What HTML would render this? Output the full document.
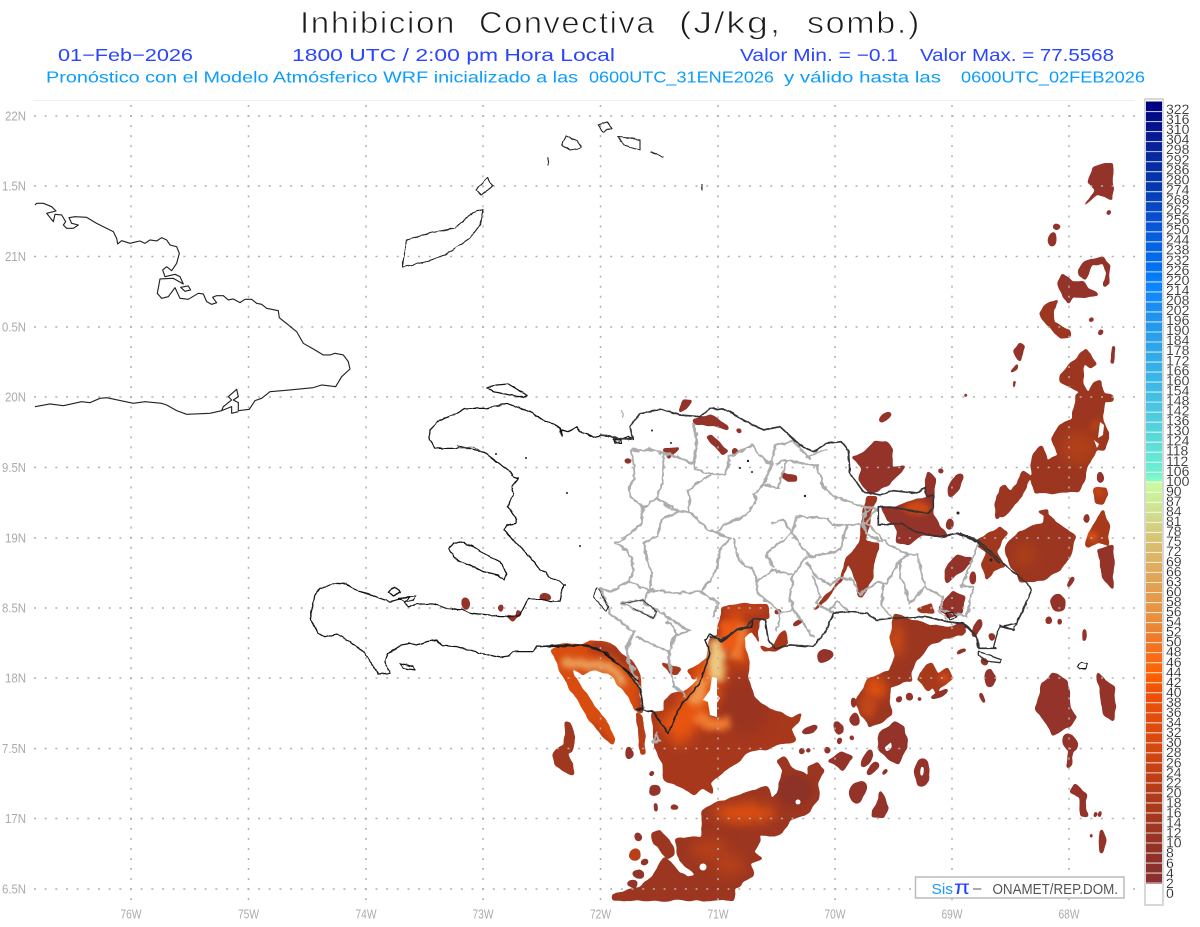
<!DOCTYPE html>
<html><head><meta charset="utf-8"><title>Inhibicion Convectiva</title>
<style>html,body{margin:0;padding:0;background:#fff}svg{display:block}text{font-family:"Liberation Sans",sans-serif}</style></head>
<body>
<svg width="1200" height="927" viewBox="0 0 1200 927" xmlns="http://www.w3.org/2000/svg">
<defs>
<filter id="b3" filterUnits="userSpaceOnUse" x="0" y="0" width="1200" height="927" color-interpolation-filters="sRGB"><feGaussianBlur stdDeviation="3"/></filter>
<filter id="b6" filterUnits="userSpaceOnUse" x="0" y="0" width="1200" height="927" color-interpolation-filters="sRGB"><feGaussianBlur stdDeviation="6"/></filter>
<filter id="goo" filterUnits="userSpaceOnUse" x="0" y="0" width="1200" height="927" color-interpolation-filters="sRGB">
<feTurbulence type="fractalNoise" baseFrequency=".07" numOctaves="2" seed="4" result="n"/>
<feDisplacementMap in="SourceGraphic" in2="n" scale="5" xChannelSelector="R" yChannelSelector="G" result="d"/>
<feGaussianBlur in="d" stdDeviation="1.1"/>
<feComponentTransfer><feFuncA type="linear" slope="8" intercept="-1.5"/></feComponentTransfer>
</filter>
<filter id="wig" filterUnits="userSpaceOnUse" x="0" y="0" width="1200" height="927" color-interpolation-filters="sRGB">
<feTurbulence type="fractalNoise" baseFrequency=".16" numOctaves="2" seed="7" result="n"/>
<feDisplacementMap in="SourceGraphic" in2="n" scale="5" xChannelSelector="R" yChannelSelector="G"/>
</filter>
<filter id="wig2" filterUnits="userSpaceOnUse" x="0" y="0" width="1200" height="927" color-interpolation-filters="sRGB">
<feTurbulence type="fractalNoise" baseFrequency=".2" numOctaves="1" seed="2" result="n"/>
<feDisplacementMap in="SourceGraphic" in2="n" scale="2.5" xChannelSelector="R" yChannelSelector="G"/>
</filter>
<linearGradient id="cb" gradientUnits="userSpaceOnUse" x1="0" y1="102" x2="0" y2="883">
<stop offset="0" stop-color="#00007f"/><stop offset=".055" stop-color="#08209a"/><stop offset=".107" stop-color="#0338ae"/><stop offset=".158" stop-color="#0855d8"/><stop offset=".21" stop-color="#0070f0"/><stop offset=".235" stop-color="#0a85ff"/><stop offset=".27" stop-color="#1e90f0"/><stop offset=".32" stop-color="#30a8e8"/><stop offset=".36" stop-color="#3cb8e8"/><stop offset=".39" stop-color="#4ac4e0"/><stop offset=".435" stop-color="#5cdcd8"/><stop offset=".475" stop-color="#70f0d0"/><stop offset=".4853" stop-color="#88ffc8"/><stop offset=".4853" stop-color="#c8ffa0"/><stop offset=".525" stop-color="#d0e090"/><stop offset=".565" stop-color="#d8c070"/><stop offset=".605" stop-color="#e0a858"/><stop offset=".66" stop-color="#e89040"/><stop offset=".69" stop-color="#f07828"/><stop offset=".735" stop-color="#ff6000"/><stop offset=".755" stop-color="#f05008"/><stop offset=".825" stop-color="#d84810"/><stop offset=".875" stop-color="#b83c18"/><stop offset=".925" stop-color="#a03820"/><stop offset=".965" stop-color="#903028"/><stop offset="1" stop-color="#883030"/>
</linearGradient>
<clipPath id="cMain"><path d="M722,607L740,604L755,606L767,605L769,617L760,620L757,632L760,645L768,650L785,630L788,643L775,650L764,652L752,630L747,633L743,637L747,653L748,677L753,697L770,710L792,718L802,713L797,722L790,730L795,740L773,747L747,753L735,763L717,777L710,783L713,793L703,787L693,795L683,788L665,780L662,763L655,747L652,712L663,712L665,702L672,695L683,692L700,678L692,678L687,670L707,660L710,638L718,636L722,607Z"/></clipPath>
<clipPath id="cCres"><path d="M553,650L560,645L582,645L590,640L610,643L630,660L640,677L640,700L642,713L635,710L628,695L617,683L608,672L590,670L582,675L572,668L573,677L593,703L612,732L615,737L613,745L602,735L590,720L573,692L560,670Z"/></clipPath>
<clipPath id="cSouth"><path d="M703,810L720,802L767,787L772,800L777,793L783,770L777,762L785,757L792,768L810,777L808,767L817,763L824,770L818,783L818,798L810,812L790,820L782,833L775,837L760,835L760,842L752,852L763,859L750,863L753,877L743,883L735,888L733,900L613,900L613,895L640,887L653,877L663,857L680,872L687,877L695,875L680,860L675,840L695,837L702,838Z"/></clipPath>
<clipPath id="cSE"><path d="M890,637L895,613L910,620L927,625L947,627L963,626L965,633L943,640L932,643L917,660L910,672L912,680L890,687L890,708L892,715L880,723L868,727L858,707L857,698L868,680L890,670L895,657Z"/></clipPath>
<clipPath id="cBand"><path d="M1060,375L1070,363L1087,349L1097,363L1092,368L1083,363L1082,383L1090,393L1093,383L1100,382L1105,393L1113,397L1113,401L1105,400L1103,420L1107,433L1105,450L1097,450L1088,463L1080,492L1035,493L1030,477L1022,497L1003,517L995,512L1000,487L1005,485L1012,492L1023,472L1032,478L1033,453L1042,447L1048,462L1058,455L1052,437L1060,425L1072,418L1078,395L1082,393L1060,382Z"/></clipPath>
<clipPath id="cD8"><path d="M895,507L907,502L933,497L935,507L932,515L947,537L943,538L923,533L912,542L907,546L897,542L897,530L880,508Z"/></clipPath>
<clipPath id="cTop"><path d="M1005,547L1018,532L1032,527L1043,523L1045,515L1037,512L1047,508L1048,515L1060,525L1075,537L1072,553L1060,570L1043,580L1022,583L1012,567Z"/></clipPath>
</defs>
<rect width="1200" height="927" fill="#fff"/>

<!-- titles -->
<g stroke="#fff" stroke-width=".8" fill="#1a1a1a" font-size="31" style="letter-spacing:1.5px">
<text x="300" y="33" textLength="156" lengthAdjust="spacingAndGlyphs">Inhibicion</text>
<text x="479" y="33" textLength="177" lengthAdjust="spacingAndGlyphs">Convectiva</text>
<text x="679" y="33" textLength="103" lengthAdjust="spacingAndGlyphs">(J/kg,</text>
<text x="807" y="33" textLength="114" lengthAdjust="spacingAndGlyphs">somb.)</text>
</g>
<g fill="#2a45ff" font-size="17.5">
<text x="58" y="61" textLength="135" lengthAdjust="spacingAndGlyphs">01−Feb−2026</text>
<text x="292" y="61" textLength="323" lengthAdjust="spacingAndGlyphs">1800 UTC / 2:00 pm Hora Local</text>
<text x="740" y="61" textLength="158" lengthAdjust="spacingAndGlyphs">Valor Min. = −0.1</text>
<text x="920" y="61" textLength="194" lengthAdjust="spacingAndGlyphs">Valor Max. = 77.5568</text>
</g>
<g fill="#0a9cff" font-size="16">
<text x="46" y="82.5" textLength="532" lengthAdjust="spacingAndGlyphs">Pronóstico con el Modelo Atmósferico WRF inicializado a las</text>
<text x="589" y="82.5" textLength="185" lengthAdjust="spacingAndGlyphs">0600UTC_31ENE2026</text>
<text x="784" y="82.5" textLength="157" lengthAdjust="spacingAndGlyphs">y válido hasta las</text>
<text x="961" y="82.5" textLength="184" lengthAdjust="spacingAndGlyphs">0600UTC_02FEB2026</text>
</g>

<line x1="33" y1="100.5" x2="1135" y2="100.5" stroke="#f0f0f0"/>

<!-- CIN field -->
<g fill="#93332a" filter="url(#goo)">
<g clip-path="url(#cMain)"><rect x="640" y="600" width="180" height="200" fill="#a8381c"/>
<ellipse cx="745" cy="705" rx="25" ry="30" fill="#9a3420" filter="url(#b6)"/>
<path d="M668,735C690,715 705,700 710,660" stroke="#e85510" stroke-width="32" fill="none" filter="url(#b6)"/>
<path d="M735,610L741,665" stroke="#e8500c" stroke-width="14" fill="none" filter="url(#b6)"/>
<path d="M697,715L710,725L730,722" stroke="#f07a30" stroke-width="12" fill="none" filter="url(#b3)"/>
<path d="M742,625L735,660" stroke="#ee7a30" stroke-width="12" fill="none" filter="url(#b3)"/>
<path d="M718,640L716,680" stroke="#ecc880" stroke-width="16" fill="none" filter="url(#b3)"/>
<path d="M703,680L694,705" stroke="#f09850" stroke-width="12" fill="none" filter="url(#b3)"/>
<path d="M728,620L728,650" stroke="#ee5a14" stroke-width="14" fill="none" filter="url(#b3)"/>
<path d="M725,608L765,610" stroke="#c8441a" stroke-width="6" fill="none" filter="url(#b3)"/>
</g>
<g clip-path="url(#cCres)"><rect x="550" y="635" width="100" height="115" fill="#d84c10"/>
<path d="M590,645L620,652L645,680L645,715" stroke="#a5381d" stroke-width="12" fill="none" filter="url(#b3)"/>
<path d="M562,662L590,665L610,666L625,685" stroke="#eba05c" stroke-width="9" fill="none" filter="url(#b3)"/>
<path d="M590,725L610,745" stroke="#b53e18" stroke-width="8" fill="none" filter="url(#b3)"/>
</g>
<path d="M637,713L643,717L645,753L640,754L638,727Z" fill="#b53e18"/>
<g clip-path="url(#cSouth)"><rect x="610" y="755" width="220" height="150" fill="#9c3620"/>
<ellipse cx="745" cy="813" rx="32" ry="9" fill="#e0500f" filter="url(#b6)"/>
<ellipse cx="710" cy="850" rx="18" ry="12" fill="#b5401a" filter="url(#b6)"/>
<ellipse cx="730" cy="865" rx="15" ry="12" fill="#b5401a" filter="url(#b6)"/>
<ellipse cx="795" cy="790" rx="18" ry="16" fill="#8d3226" filter="url(#b3)"/>
</g>
<path d="M652,832L660,830L672,845L675,855L668,858L655,845Z" fill="#9c3620"/>
<ellipse cx="634" cy="854" rx="5" ry="6" fill="#b84018"/><ellipse cx="638" cy="837" rx="3" ry="4"/><ellipse cx="645" cy="863" rx="3" ry="3"/><ellipse cx="638" cy="874" rx="5" ry="4"/><ellipse cx="632" cy="884" rx="4" ry="3"/>
<ellipse cx="654" cy="790" rx="5" ry="5"/><circle cx="652" cy="773" r="2"/><ellipse cx="674" cy="807" rx="3.5" ry="2"/><ellipse cx="656" cy="808" rx="1.5" ry="4"/><ellipse cx="629" cy="753" rx="3" ry="6"/>
<path d="M564,722L570,722L575,738L572,750L568,752L570,762L574,775L566,772L555,765L552,755L560,747L563,745L565,735Z" fill="#a0381f"/>
<ellipse cx="810" cy="730" rx="8" ry="3" transform="rotate(-30 810 730)"/><circle cx="803" cy="751" r="2.5"/><circle cx="827" cy="750" r="3"/><circle cx="809" cy="751" r="1.5"/><ellipse cx="838" cy="728" rx="3" ry="6"/>
<path d="M836,762L840,753L840,770Z"/>
<path d="M662,662L672,667L682,670L678,675L670,673Z" fill="#a8381c"/>
<ellipse cx="466" cy="603" rx="3.5" ry="6"/><ellipse cx="545" cy="597" rx="5" ry="3"/><ellipse cx="501" cy="609" rx="2" ry="3"/><path d="M507,615L515,617L518,609L520,612L513,622Z"/><ellipse cx="627" cy="460" rx="3" ry="2"/>
<path d="M684,400L691,400L685,410L680,413Z"/>
<path d="M693,418L710,415L728,425L728,430L715,425L695,423Z"/>
<path d="M663,448L680,447L668,459Z"/>
<path d="M705,437L710,435L728,450L723,454Z"/>
<circle cx="735" cy="452" r="3"/><circle cx="738" cy="431" r="2"/>
<path d="M782,472L787,475L797,477L797,482L788,482L782,475Z"/>
<path d="M853,458L867,450L875,442L887,442L892,450L892,467L907,466L893,480L877,493L870,495L860,480L862,467Z"/>
<ellipse cx="885" cy="417" rx="6" ry="3" transform="rotate(-30 885 417)"/>
<g clip-path="url(#cD8)"><rect x="875" y="490" width="80" height="60"/><ellipse cx="918" cy="508" rx="14" ry="6" fill="#d24c12" filter="url(#b3)"/></g>
<path d="M927,472L935,480L933,497L925,497L926,482Z"/>
<ellipse cx="955" cy="485" rx="4" ry="13" transform="rotate(30 955 485)"/><circle cx="941" cy="471" r="2"/>
<path d="M867,497L877,498L870,513L870,523L867,533L867,542L878,543L872,577L863,597L858,597L857,582L848,563L845,570L840,580L830,597L810,613L833,590L842,573L847,557L860,543L863,520Z" fill="#9c3620"/>
<ellipse cx="950" cy="525" rx="3" ry="5"/><ellipse cx="998" cy="507" rx="3" ry="12"/>
<path d="M945,570L957,555L972,560L960,572L947,583Z"/>
<path d="M940,608L952,590L965,597L963,613L947,617Z"/>
<path d="M917,610L933,603L935,613L920,613Z" fill="#a0381f"/>
<ellipse cx="959" cy="630" rx="5" ry="6"/><ellipse cx="978" cy="627" rx="3" ry="8" transform="rotate(20 978 627)"/>
<ellipse cx="797" cy="622" rx="5" ry="2" transform="rotate(-25 797 622)"/><ellipse cx="825" cy="656" rx="8" ry="5.5" transform="rotate(-35 825 656)"/><ellipse cx="778" cy="612" rx="3" ry="2"/>
<path d="M1095,167L1113,163L1112,200L1097,193L1083,208L1095,190L1088,182Z"/><circle cx="1108" cy="212" r="2"/>
<ellipse cx="1052" cy="240" rx="4" ry="7" transform="rotate(15 1052 240)"/><ellipse cx="1056" cy="227" rx="3.5" ry="2.5"/>
<path d="M1058,282L1064,275L1073,282L1082,282L1098,295L1083,297L1073,297L1068,303L1060,290Z"/>
<path d="M1078,270L1085,262L1103,257L1109,267L1108,282L1103,287L1103,282L1107,273L1103,263L1092,265L1084,280L1078,275Z"/>
<path d="M1039,313L1050,302L1058,300L1053,310L1055,323L1070,330L1070,337L1060,338L1047,325Z" fill="#9c3620"/>
<path d="M1013,352L1020,343L1025,347L1021,362Z"/>
<path d="M1011,372L1018,363L1016,370Z"/><path d="M1022,374L1027,380L1028,382Z"/><path d="M1013,381L1015,381L1014,392Z"/>
<circle cx="1091" cy="320" r="1.7"/><circle cx="1101" cy="332" r="2"/><circle cx="966" cy="396" r="1.5"/>
<rect x="1112" y="347" width="2" height="16"/>
<g clip-path="url(#cBand)"><rect x="990" y="345" width="130" height="175" fill="#9c3620"/><ellipse cx="1078" cy="448" rx="18" ry="16" fill="#b04018" filter="url(#b6)"/><ellipse cx="1096" cy="425" rx="6" ry="8" fill="#b04018" filter="url(#b3)"/></g>
<ellipse cx="1100" cy="477" rx="3" ry="5"/>
<path d="M1095,490L1107,487L1108,495L1103,503L1095,503Z" fill="#a83a1c"/><ellipse cx="1100" cy="493" rx="5" ry="3" fill="#de5010" filter="url(#b3)"/>
<path d="M1085,545L1095,523L1103,510L1108,527L1108,545L1098,542L1088,547Z" fill="#a83a1c"/><ellipse cx="1093" cy="537" rx="4" ry="4" fill="#f06010" filter="url(#b3)"/>
<ellipse cx="1087" cy="518" rx="2.5" ry="4"/>
<path d="M1098,550L1113,545L1113,590L1103,577Z"/>
<g clip-path="url(#cTop)"><rect x="1000" y="505" width="80" height="80" fill="#9c3620"/><ellipse cx="1025" cy="555" rx="10" ry="12" fill="#ac4018" filter="url(#b6)"/></g>
<path d="M978,540L1000,527L1007,533L995,550L1005,567L993,570L987,580L982,563L987,553L978,548Z" fill="#a0381f"/>
<ellipse cx="1058" cy="603" rx="7" ry="8"/><ellipse cx="1049" cy="621" rx="3" ry="3"/><ellipse cx="1060" cy="622" rx="1.5" ry="3"/><ellipse cx="973" cy="578" rx="3" ry="6"/><ellipse cx="968" cy="560" rx="5" ry="3"/><ellipse cx="1070" cy="582" rx="2" ry="5" transform="rotate(30 1070 582)"/>
<g clip-path="url(#cSE)"><rect x="850" y="605" width="120" height="125" fill="#9c3620"/><ellipse cx="875" cy="688" rx="10" ry="12" fill="#e8540c" filter="url(#b6)"/><ellipse cx="896" cy="640" rx="7" ry="18" fill="#d04c14" filter="url(#b6)"/><ellipse cx="868" cy="707" rx="8" ry="12" fill="#c0461a" filter="url(#b3)"/></g>
<path d="M918,680L927,665L933,663L937,675L947,668L952,678L935,692L932,685L927,690Z" fill="#a83a1c"/><ellipse cx="943" cy="678" rx="5" ry="4" fill="#d8501a" filter="url(#b3)"/>
<ellipse cx="939" cy="694" rx="9" ry="2.5" transform="rotate(-25 939 694)"/>
<circle cx="899" cy="699" r="2.5"/><circle cx="909" cy="697" r="3.5"/><circle cx="920" cy="699" r="1.5"/><ellipse cx="853" cy="703" rx="2.5" ry="5"/><ellipse cx="854" cy="719" rx="5" ry="6"/><ellipse cx="840" cy="728" rx="3" ry="4"/><circle cx="851" cy="738" r="2"/><ellipse cx="840" cy="741" rx="1.5" ry="3"/><ellipse cx="962" cy="652" rx="5" ry="1.5" transform="rotate(-25 962 652)"/><ellipse cx="990" cy="678" rx="5" ry="9"/><ellipse cx="982" cy="698" rx="1.5" ry="5" transform="rotate(-20 982 698)"/><ellipse cx="977" cy="628" rx="3" ry="9" transform="rotate(20 977 628)"/><ellipse cx="992" cy="637" rx="2.5" ry="3"/><ellipse cx="984" cy="662" rx="3" ry="3"/>
<path fill-rule="evenodd" d="M880,733L895,722L903,728L907,748L898,763L890,760L878,748ZM883,748L893,738L893,747L887,753Z"/>
<path d="M828,762L842,752L853,758L843,771L835,765Z"/>
<ellipse cx="867" cy="758" rx="4" ry="9" transform="rotate(30 867 758)"/><ellipse cx="873" cy="768" rx="3" ry="7" transform="rotate(35 873 768)"/><ellipse cx="885" cy="772" rx="1.5" ry="3" transform="rotate(35 885 772)"/><ellipse cx="827" cy="750" rx="3" ry="2.5"/>
<path fill-rule="evenodd" d="M922,759C928,759 929,768 929,774C929,782 926,787 922,787C918,787 915,780 915,774C915,766 917,759 922,759ZM920,765L924,766L924,778L920,778Z"/>
<ellipse cx="858" cy="792" rx="8" ry="11" transform="rotate(25 858 792)"/>
<path d="M867,833L880,790L889,807L883,818L872,817Z"/>
<path d="M1053,672L1067,680L1070,707L1077,717L1070,727L1053,735L1045,723L1036,707L1042,683Z"/>
<ellipse cx="1070" cy="743" rx="7" ry="8"/><path d="M1068,750L1072,750L1071,765L1067,768Z"/>
<path d="M1098,673L1114,687L1114,722L1103,715Z"/>
<path d="M1075,783L1085,795L1087,817L1082,817L1080,797L1070,792Z"/>
<ellipse cx="1102" cy="842" rx="2.5" ry="12"/><ellipse cx="1084" cy="635" rx="1.5" ry="6"/><ellipse cx="1095" cy="815" rx="1.2" ry="2.5"/><ellipse cx="1100" cy="814" rx="1.2" ry="3"/><ellipse cx="1091" cy="836" rx="1.2" ry="2"/><ellipse cx="1049" cy="620" rx="2.5" ry="3"/>
</g>
<g fill="#fff"><path d="M712,677L717,678L717,695L720,698L717,703L717,717L710,715L708,702L703,700L710,690Z"/><circle cx="703" cy="867" r="3.5"/><circle cx="798" cy="802" r="2.5"/><path d="M1100,422L1104,425L1103,435L1098,438Z"/><path d="M1094,440L1099,444L1097,448Z"/></g>

<!-- grid -->
<g stroke="#b0b0b0" stroke-width="1.5" fill="none">
<path stroke-dasharray="2 8.67" d="M34,116H1137M34,186H1137M34,256.5H1137M34,327H1137M34,397H1137M34,467.5H1137M34,538H1137M34,608H1137M34,678H1137M34,748.5H1137M34,818.5H1137M34,889H1137"/>
<path stroke-dasharray="2 8.04" d="M131,105V905M248.5,105V905M366,105V905M483,105V905M600.5,105V905M718,105V905M835,105V905M952,105V905M1069,105V905"/>
</g>

<!-- province borders -->
<g filter="url(#wig)">
<g transform="translate(600,400) scale(.3333)" fill="none" stroke="#adadad" stroke-width="6.5" stroke-linejoin="round" stroke-linecap="round">
<path d="M95,145L105,230L85,270L95,295L130,320L125,370L80,410L45,430L85,455L100,500L95,530L75,550L35,575L0,565L20,610L30,640L100,695L80,740L85,790L105,810"/>
<path d="M95,145L130,155L150,148L190,160L225,170L280,190L290,130L280,75M290,100L285,210L330,220L375,225L390,180L385,170L430,150L455,135L500,185L520,190L490,255L535,265L560,180L600,190L650,195L670,260L700,290L790,320L830,325L800,370L740,375L700,375L680,355L590,350L575,400L630,470L720,450L740,380"/>
<path d="M190,160L190,240L170,295L235,335L270,335L265,270L330,225M170,295L130,320"/>
<path d="M235,335L185,360L170,410L130,430L145,500L155,510L150,570"/>
<path d="M270,335L320,385L350,400L370,375L440,345L470,300L460,285L490,255"/>
<path d="M350,400L390,415L360,450L350,510L330,545L300,575"/>
<path d="M400,415L415,480L460,510L470,545L520,510L580,525L620,470"/>
<path d="M470,545L475,580L510,610L540,640L530,690M540,640L580,630L570,590L580,525"/>
<path d="M515,370L550,360L575,400L510,450L500,470L520,500"/>
<path d="M620,490L650,530L690,555L720,535L760,540L780,585L830,545L860,550L900,480L925,465L860,430L800,370"/>
<path d="M900,480L900,520L930,610L975,560L950,460L925,465"/>
<path d="M975,560L1030,590L1020,630L1100,650L1120,560L1085,560L1120,470L1135,430"/>
<path d="M850,550L845,620L875,650"/>
<path d="M640,530L660,590L650,610L700,640M580,630L640,710M745,635L710,605L690,630"/>
<path d="M80,545L150,570L235,580L300,575L355,610L340,650"/>
<path d="M150,570L130,610L170,630L230,670L270,690L220,710L205,780L210,810"/>
<path d="M65,610L130,600L170,635L160,655L100,625Z"/>
<path d="M790,320L800,345L785,370L800,400L845,425M820,320L790,345"/>
<path d="M490,255L515,190L525,135L580,125L630,175M530,190L550,180L610,190M620,170L680,150"/>
<path d="M60,35L70,45L65,55" stroke-width="4"/>
<path d="M1015,630L1060,680" stroke-width="3"/>
</g>
<g transform="translate(540,620) scale(.3333)" fill="none" stroke="#adadad" stroke-width="6.5" stroke-linejoin="round">
<path d="M285,30L260,95L275,150L300,200L310,265M290,50L385,95L395,160L400,200L430,215L435,235M380,0L410,40L395,85"/>
<path d="M350,340L360,365L340,368Z"/>
</g>
</g>

<!-- Cuba -->
<g transform="translate(20,180) scale(.3333)" fill="none" stroke="#222" stroke-width="3.4" stroke-linejoin="round">
<path d="M45,75L50,70L70,70L95,80L108,93L80,100L100,125L105,103L125,105L137,125L130,135L140,145L160,145L175,135L155,130L147,113L165,110L200,112L230,130L280,155L290,175L293,192L305,182L330,190L350,185L360,183L375,190L390,180L410,183L425,173L440,180L450,195L470,200L478,220L470,250L455,272L440,260L428,270L435,290L465,283L480,290L490,312L460,295L420,297L412,340L425,355L445,350L465,323L480,355L505,358L535,340L550,342L560,365L575,373L590,368L578,352L590,347L610,347L625,360L640,357L660,368L675,358L695,358L710,370L725,373L740,385L775,392L778,413L805,435L830,455L850,490L880,507L910,525L930,525L945,520L970,525L985,545L990,567L965,590L947,620L905,615L880,623L810,630L750,635L725,655L705,662L688,688L655,692L655,668L640,660L655,650L650,628L625,650L635,660L610,680L605,692L635,680L635,700L655,695"/>
<path d="M605,692L570,700L500,703L470,692L440,675L425,670L375,665L340,670L260,653L240,655L210,668L185,665L130,677L90,672L45,680"/>
<path d="M482,322L505,318L512,330L495,334Z"/>
</g>

<g filter="url(#wig2)">
<!-- Bahamas / Turks -->
<g fill="none" stroke="#222" stroke-width="1.1" stroke-linejoin="round">
<path d="M403,262L407,240L430,233L455,228L472,213L483,209L480,225L470,238L445,255L425,262L403,267Z"/>
<path d="M476,190L487,178L493,186L481,195Z"/>
<path d="M562,145L566,136L578,141L581,148L570,150Z"/>
<path d="M598,125L607,122L612,128L603,132Z"/>
<path d="M618,137L630,138L640,140L640,150L625,146Z"/>
<path d="M650,152L664,157"/><path d="M548,157L548,165"/><path d="M702,184L702,190"/>
</g>
<!-- Hispaniola -->
<g transform="translate(300,380) scale(.3333)" fill="none" stroke="#111" stroke-width="3.8" stroke-linejoin="round">
<path d="M1000,178L985,170L960,180L940,178L945,190L965,190L960,175L905,165L880,172L860,160L840,155L830,140L805,155L785,150L785,170L780,145L760,130L730,122L690,95L620,70L560,85L495,85L460,105L420,120L390,150L388,180L405,205L470,205L480,200L520,208L550,215L590,245L625,270L640,290L655,295L635,320L640,345L630,365L625,380L650,420L650,430L620,435L612,450L650,490L690,530L720,570L740,575L745,590L780,605L790,615L780,665L750,665L735,660L685,655L660,705L640,710L600,710L570,705L515,700L490,690L440,685L400,672L350,672L325,682L315,668L330,650L310,655L270,665L240,655L215,645L175,635L140,612L105,610L60,625L45,645L30,715L55,760L75,772L110,762L150,785L195,820L235,882L270,880L255,845L265,820L305,795L330,790L350,795L380,785L410,780L425,797L470,800L540,820L600,832L625,828L640,815L700,815L710,798L770,800L860,795L900,810L950,850L985,875L1015,905"/>
<path d="M445,505L460,490L480,485L520,500L560,525L600,545L620,580L612,600L595,585L550,575L510,555L470,540Z"/>
<path d="M560,22L590,15L625,12L680,45L672,52L630,45L580,35Z"/>
<path d="M300,850L340,860L345,870L310,865Z"/>
<path d="M265,635L285,622L303,635L280,648Z"/>
<path d="M295,655L350,648L340,660L310,665Z" stroke-width="2.5"/>
<path d="M472,195L480,205L520,200L545,215" stroke="#555" stroke-width="2.5"/>
<path d="M890,622L880,650L918,695L925,680L895,625" stroke="#222" stroke-width="3"/>
</g>
<g transform="translate(540,620) scale(.3333)" fill="none" stroke="#222" stroke-width="4.5" stroke-linejoin="round">
<path d="M0,80L60,75L130,75L200,100L260,155L300,205L310,265L290,268L340,275L385,340L420,260L480,190L510,100L495,60L510,42L545,65L590,30L635,20L640,0"/>
</g>
<g transform="translate(600,400) scale(.3333)" fill="none" stroke="#333" stroke-width="5" stroke-linejoin="round">
<path d="M330,710L365,720L410,690L440,680L460,655L495,660L505,720L525,745L570,735L640,740L680,690L700,640L745,635L800,640L830,660L870,655L980,650L1040,665L1090,670L1130,710L1135,745L1190,745"/>
<path d="M0,105L30,108L45,115L100,118L90,80L120,40L180,28L240,45L300,50L330,25L380,30L430,60L490,90L540,80L600,135L640,155L680,130L725,125L745,150L750,220L790,275L840,285L880,272L950,280L975,262L980,290L1000,285L1000,320L985,340L895,325L835,320L835,375L905,370L945,395L1020,410L1070,400L1130,425L1200,490"/>
<path d="M65,610L130,600L170,635L160,655L100,625" stroke-width="3"/>
<path d="M1040,640L1050,635L1070,650L1050,660Z" stroke="#111" stroke-width="3"/>
<path d="M40,115L50,130L65,120" stroke-width="3"/>
</g>
<g transform="translate(960,150) scale(.3333)" fill="none" stroke="#333" stroke-width="4.6" stroke-linejoin="round">
<path d="M0,1150L60,1175L130,1240L200,1300L215,1320L195,1365L170,1420L120,1430L165,1440"/>
</g>
<g transform="translate(800,600) scale(.3333)" fill="none" stroke="#333" stroke-width="4" stroke-linejoin="round">
<path d="M450,65L500,75L530,110L540,145L580,145L590,105L600,75L640,90L655,60L680,10"/>
<path d="M535,155L570,165L605,180L600,188L555,183L535,165Z"/>
<path d="M830,198L845,187L862,190L858,207L840,207Z" stroke-width="3" stroke="#111"/>
</g>
</g>
<g fill="#222"><circle cx="652" cy="430.5" r="1"/><circle cx="671" cy="443" r="1"/><circle cx="748" cy="461" r="1.2"/><circle cx="740" cy="468" r="1"/><circle cx="752" cy="472" r="1"/><circle cx="805" cy="496" r="1.2"/><circle cx="958" cy="513" r="1.5"/><circle cx="991" cy="560" r="1.5"/><circle cx="496" cy="454" r="1"/><circle cx="526" cy="458" r="1"/><circle cx="567" cy="493" r="1"/><circle cx="580" cy="546" r="1"/><circle cx="565" cy="585" r="1"/></g>

<!-- axis labels -->
<g fill="#aaa" font-size="13">
<text x="5" y="120.5" textLength="21" lengthAdjust="spacingAndGlyphs">22N</text>
<text x="2" y="190.5" textLength="24" lengthAdjust="spacingAndGlyphs">1.5N</text>
<text x="5" y="261" textLength="21" lengthAdjust="spacingAndGlyphs">21N</text>
<text x="2" y="331.5" textLength="24" lengthAdjust="spacingAndGlyphs">0.5N</text>
<text x="5" y="401.5" textLength="21" lengthAdjust="spacingAndGlyphs">20N</text>
<text x="2" y="472" textLength="24" lengthAdjust="spacingAndGlyphs">9.5N</text>
<text x="5" y="542.5" textLength="21" lengthAdjust="spacingAndGlyphs">19N</text>
<text x="2" y="612.5" textLength="24" lengthAdjust="spacingAndGlyphs">8.5N</text>
<text x="5" y="682.5" textLength="21" lengthAdjust="spacingAndGlyphs">18N</text>
<text x="2" y="753" textLength="24" lengthAdjust="spacingAndGlyphs">7.5N</text>
<text x="5" y="823" textLength="21" lengthAdjust="spacingAndGlyphs">17N</text>
<text x="2" y="893.5" textLength="24" lengthAdjust="spacingAndGlyphs">6.5N</text>
</g>
<g fill="#aaa" font-size="13">
<text x="120.5" y="918.5" textLength="21" lengthAdjust="spacingAndGlyphs">76W</text>
<text x="238" y="918.5" textLength="21" lengthAdjust="spacingAndGlyphs">75W</text>
<text x="355.5" y="918.5" textLength="21" lengthAdjust="spacingAndGlyphs">74W</text>
<text x="472.5" y="918.5" textLength="21" lengthAdjust="spacingAndGlyphs">73W</text>
<text x="590" y="918.5" textLength="21" lengthAdjust="spacingAndGlyphs">72W</text>
<text x="707.5" y="918.5" textLength="21" lengthAdjust="spacingAndGlyphs">71W</text>
<text x="824.5" y="918.5" textLength="21" lengthAdjust="spacingAndGlyphs">70W</text>
<text x="941.5" y="918.5" textLength="21" lengthAdjust="spacingAndGlyphs">69W</text>
<text x="1058.5" y="918.5" textLength="21" lengthAdjust="spacingAndGlyphs">68W</text>
</g>

<!-- logo box -->
<rect x="915.5" y="877" width="208.5" height="21" fill="#fff" stroke="#bbb" stroke-width="1.5"/>
<text x="931.5" y="894" font-size="15" fill="#1e96ff" textLength="21.5" lengthAdjust="spacingAndGlyphs">Sis</text>
<text x="954" y="894" font-size="19" fill="#2040ff" textLength="16" lengthAdjust="spacingAndGlyphs">π</text>
<text x="973" y="893" font-size="15" fill="#555">–</text>
<text x="992.5" y="894" font-size="15" fill="#555" textLength="125.5" lengthAdjust="spacingAndGlyphs">ONAMET/REP.DOM.</text>

<!-- colorbar -->
<rect x="1145" y="99" width="18" height="806" fill="#fff" stroke="#d8d8d8" stroke-width="2"/>
<rect x="1146" y="101.5" width="16" height="782" fill="url(#cb)"/>
<line x1="1154" y1="111" x2="1154" y2="883" stroke="#fff" stroke-opacity=".75" stroke-width="16" stroke-dasharray="1.1 8.92"/>
<text fill="#1c1c1c" font-size="14" stroke="#fff" stroke-width=".2">
<tspan x="1166" y="114">322</tspan><tspan x="1166" y="124">316</tspan><tspan x="1166" y="134.1">310</tspan><tspan x="1166" y="144.2">304</tspan><tspan x="1166" y="154.2">298</tspan><tspan x="1166" y="164.3">292</tspan><tspan x="1166" y="174.3">286</tspan><tspan x="1166" y="184.4">280</tspan><tspan x="1166" y="194.4">274</tspan><tspan x="1166" y="204.5">268</tspan><tspan x="1166" y="214.5">262</tspan><tspan x="1166" y="224.6">256</tspan><tspan x="1166" y="234.6">250</tspan><tspan x="1166" y="244.7">244</tspan><tspan x="1166" y="254.7">238</tspan><tspan x="1166" y="264.8">232</tspan><tspan x="1166" y="274.8">226</tspan><tspan x="1166" y="284.9">220</tspan><tspan x="1166" y="294.9">214</tspan><tspan x="1166" y="305">208</tspan><tspan x="1166" y="315">202</tspan><tspan x="1166" y="325">196</tspan><tspan x="1166" y="335.1">190</tspan><tspan x="1166" y="345.2">184</tspan><tspan x="1166" y="355.2">178</tspan><tspan x="1166" y="365.3">172</tspan><tspan x="1166" y="375.3">166</tspan><tspan x="1166" y="385.4">160</tspan><tspan x="1166" y="395.4">154</tspan><tspan x="1166" y="405.5">148</tspan><tspan x="1166" y="415.5">142</tspan><tspan x="1166" y="425.6">136</tspan><tspan x="1166" y="435.6">130</tspan><tspan x="1166" y="445.7">124</tspan><tspan x="1166" y="455.7">118</tspan><tspan x="1166" y="465.8">112</tspan><tspan x="1166" y="475.8">106</tspan><tspan x="1166" y="485.9">100</tspan>
<tspan x="1166" y="495.9">90</tspan><tspan x="1166" y="506">87</tspan><tspan x="1166" y="516">84</tspan><tspan x="1166" y="526">81</tspan><tspan x="1166" y="536.1">78</tspan><tspan x="1166" y="546.2">75</tspan><tspan x="1166" y="556.2">72</tspan><tspan x="1166" y="566.3">69</tspan><tspan x="1166" y="576.3">66</tspan><tspan x="1166" y="586.4">63</tspan><tspan x="1166" y="596.4">60</tspan><tspan x="1166" y="606.5">58</tspan><tspan x="1166" y="616.5">56</tspan><tspan x="1166" y="626.6">54</tspan><tspan x="1166" y="636.6">52</tspan><tspan x="1166" y="646.7">50</tspan><tspan x="1166" y="656.7">48</tspan><tspan x="1166" y="666.8">46</tspan><tspan x="1166" y="676.8">44</tspan><tspan x="1166" y="686.9">42</tspan><tspan x="1166" y="696.9">40</tspan><tspan x="1166" y="707">38</tspan><tspan x="1166" y="717">36</tspan><tspan x="1166" y="727">34</tspan><tspan x="1166" y="737.1">32</tspan><tspan x="1166" y="747.2">30</tspan><tspan x="1166" y="757.2">28</tspan><tspan x="1166" y="767.3">26</tspan><tspan x="1166" y="777.3">24</tspan><tspan x="1166" y="787.4">22</tspan><tspan x="1166" y="797.4">20</tspan><tspan x="1166" y="807.5">18</tspan><tspan x="1166" y="817.5">16</tspan><tspan x="1166" y="827.6">14</tspan><tspan x="1166" y="837.6">12</tspan><tspan x="1166" y="847.7">10</tspan><tspan x="1166" y="857.7">8</tspan><tspan x="1166" y="867.8">6</tspan><tspan x="1166" y="877.8">4</tspan><tspan x="1166" y="887.9">2</tspan><tspan x="1166" y="897.9">0</tspan>
</text>
</svg>
</body></html>
